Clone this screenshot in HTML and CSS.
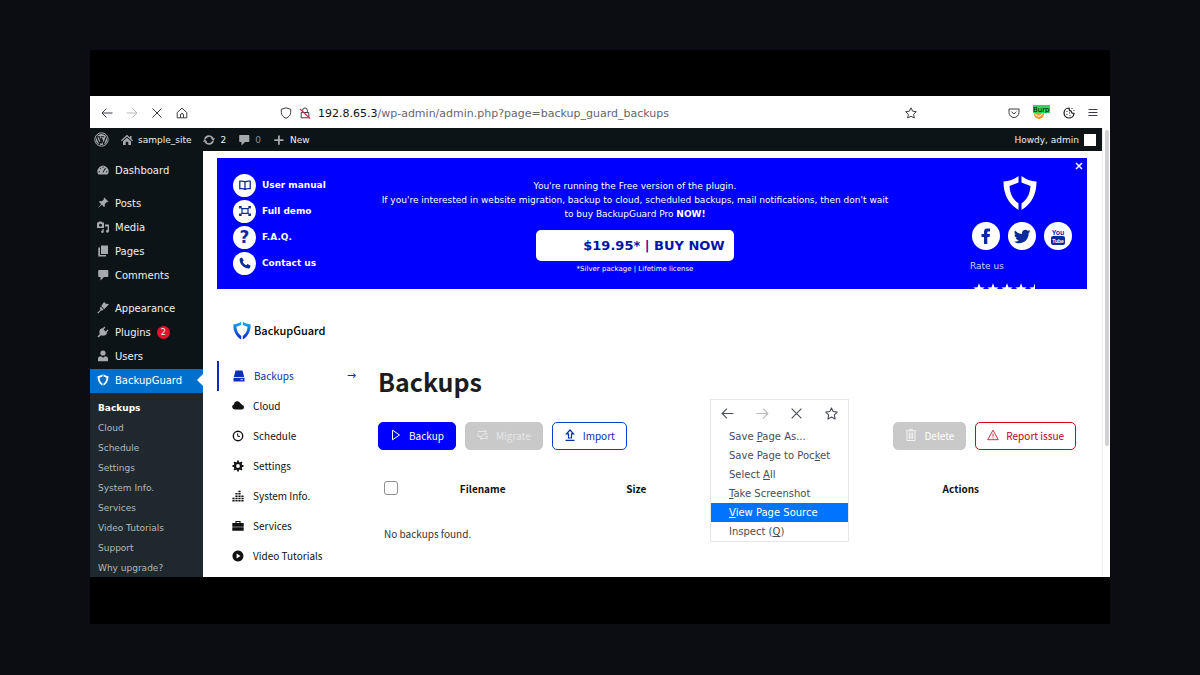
FILE: index.html
```html
<!DOCTYPE html>
<html lang="en">
<head>
  <meta charset="UTF-8">
  <meta content="width=device-width, initial-scale=1.0"
        name="viewport">
  <title>Backups - BackupGuard</title>
  <link rel="stylesheet" href="styles.css">
</head>
<body>
  <svg class="defs" width="0" height="0" aria-hidden="true">
    <symbol id="shield" viewBox="0 0 34 36">
      <path d="M15.500 1v6.500L6.500 11c.5 7.500 3 13 9 17.500V35C5 28.500.5 19 .5 6.500 6.500 6 11 4.500 15.500 1z"/>
      <path d="M18.500 1v6.500l9 3.500c-.5 7.500-3 13-9 17.500V35C29 28.500 33.500 19 33.500 6.500 27.500 6 23 4.500 18.500 1z"/>
    </symbol>
    <symbol id="left" viewBox="0 0 12 12"><path d="M11.500 6H1M5.500 1.500 1 6l4.500 4.500" fill="none" stroke="currentColor"/></symbol>
    <symbol id="right" viewBox="0 0 12 12"><path d="M.5 6H11M6.500 1.500 11 6l-4.500 4.500" fill="none" stroke="currentColor"/></symbol>
    <symbol id="cross" viewBox="0 0 12 12"><path d="M1.500 1.500l9 9M10.500 1.500l-9 9" fill="none" stroke="currentColor"/></symbol>
    <symbol id="star-line" viewBox="0 0 12 12"><path d="M6 .8l1.600 3.400 3.700.5-2.700 2.600.7 3.700L6 9.200 2.700 11l.7-3.700L.7 4.700l3.700-.5z" fill="none" stroke="currentColor" stroke-linejoin="round"/></symbol>
    <symbol id="comment" viewBox="0 0 12 12"><path d="M2 1h8.500q.8 0 .8.800v5.400q0 .8-.8.800H7L3.500 11.500V8H2q-.8 0-.8-.8V1.800Q1.200 1 2 1z"/></symbol>
    <symbol id="star" viewBox="0 0 12 12"><path d="M6 .3l1.500 3.900 4.200.2-3.300 2.600 1.200 4.100L6 8.800l-3.600 2.300L3.600 7 .3 4.400l4.200-.2z"/></symbol>
  </svg>

  <div class="frame">
    <div class="browser">
      <div class="toolbar">
        <div class="nav-buttons">
          <button aria-label="Back"><svg class="icon"><use href="#left"/></svg></button>
          <button aria-label="Forward" class="dim"><svg class="icon"><use href="#right"/></svg></button>
          <button aria-label="Stop"><svg class="icon"><use href="#cross"/></svg></button>
          <button aria-label="Home"><svg class="icon" viewBox="0 0 12 12"><path d="M1.200 5.500 6 1.200l4.800 4.300v5.300H1.200zM4.500 10.800V8a1.500 1.500 0 0 1 3 0v2.800" fill="none" stroke="currentColor" stroke-linejoin="round"/></svg></button>
        </div>
        <div class="address">
          <svg class="icon" viewBox="0 0 12 12"><path d="M6 .8l4.700 1.500v3.200c0 2.500-1.700 4.500-4.700 5.800-3-1.300-4.700-3.300-4.700-5.800V2.300z" fill="none" stroke="currentColor" stroke-linejoin="round"/></svg>
          <svg class="icon" viewBox="0 0 12 12"><path d="M2.200 5.500h7.600v5.300H2.200zM3.700 5.500V3.200a2.300 2.300 0 0 1 4.600 0v2.300" fill="none" stroke="currentColor"/><path d="M1 2l10 9.500" stroke="#e22850" stroke-width="1.200"/></svg>
          <span class="url"><b>192.8.65.3</b>/wp-admin/admin.php?page=backup_guard_backups</span>
          <button aria-label="Bookmark this page"><svg class="icon"><use href="#star-line"/></svg></button>
        </div>
        <div class="extensions">
          <button aria-label="Pocket"><svg class="icon" viewBox="0 0 12 12"><path d="M1 2h10v3.500a5 5 0 0 1-10 0zM3.500 4.700 6 7l2.500-2.300" fill="none" stroke="currentColor" stroke-linejoin="round"/></svg></button>
          <button aria-label="Burp proxy" class="proxy"><svg width="18" height="18" viewBox="0 0 18 18"><circle cx="7" cy="10" r="5" fill="#f29a2e"/><path d="M3.500 10.500q4 4 7-1" fill="none" stroke="#fff"/><path d="M1 1h17v8H1z" fill="#39d353"/><text x="1" y="8" class="proxy-text">Burp</text></svg></button>
          <button aria-label="Cookies"><svg class="icon" viewBox="0 0 12 12"><path d="M6 1a5 5 0 1 0 5 5.500L9 6 8 4 6.500 3.500zM8.500 1.500h1M10.500 3.500h.8" fill="none" stroke="#111" stroke-width="1.200"/><path d="M3.500 4h1v1h-1zM3.500 7h1v1h-1zM6 5.500h1v1H6zM6.500 8.300h1v1h-1z" fill="#111"/></svg></button>
          <button aria-label="Menu"><svg class="icon" viewBox="0 0 12 12"><path d="M1.500 2.500h9M1.500 5.500h9M1.500 8.500h9" stroke="currentColor"/></svg></button>
        </div>
      </div>

      <div class="viewport">
        <div class="site">
          <header class="adminbar">
            <a href="#" aria-label="WordPress"><svg width="15" height="15" viewBox="0 0 15 15"><circle cx="7.500" cy="7.500" r="6.700" fill="none" stroke="#a7aaad"/><circle cx="7.500" cy="7.500" r="5.600" fill="#a7aaad"/><path d="M2.500 4.800 5.600 12 7.600 6.500 9.600 12l2.600-7M5.200 4.800 7.800 11.500M2 4.800h4M6.700 4.800h3.500" fill="none" stroke="#0c1418" stroke-width="1.100"/></svg></a>
            <a href="#" class="site-name"><svg class="icon" viewBox="0 0 12 12"><path d="M6 .8 9 3.500V2h1.500v3L12 6.300l-.8.9L6 2.600.8 7.200 0 6.300z"/><path d="M6 3.700l4 3.500V11H7.300V7.800H4.700V11H2V7.200z"/></svg>sample_site</a>
            <a href="#"><svg class="icon" viewBox="0 0 12 12"><path d="M2 5a4.200 4.200 0 0 1 7.800-.6M10 7a4.200 4.200 0 0 1-7.800.6" fill="none" stroke="#a7aaad" stroke-width="1.700"/><path d="M7.800 4.300H12L10.300 7zM4.200 7.700H0L1.700 5z"/></svg>2</a>
            <a href="#" class="muted"><svg class="icon"><use href="#comment"/></svg>0</a>
            <a href="#"><svg class="icon" viewBox="0 0 12 12"><path d="M5 1.500h1.800v3.700h3.700V7H6.800v3.700H5V7H1.300V5.200H5z"/></svg>New</a>
            <a href="#" class="account">Howdy, admin<span class="avatar"></span></a>
          </header>

          <div class="columns">
            <nav class="sidebar" aria-label="Admin menu">
              <div class="group">
                <a href="#"><svg class="icon" viewBox="0 0 12 12"><path d="M1.500 10.500A5.500 5.500 0 1 1 10.500 10.500z"/><path d="M6 8.500 8.500 4M3 7.800H1.800M3.700 4.800l-.8-.8M6 3.800V2.500M10.200 7.800H9" stroke="#0c1418"/></svg>Dashboard</a>
              </div>
              <div class="group">
                <a href="#"><svg class="icon" viewBox="0 0 12 12"><path d="M7.300.5l4.200 4.200-1 .6-.7-.2L7.700 7.200l.2 2-.9.8-2.200-2.200L.5 11.500l3.600-4.400L2 4.900l.9-.8 2 .2L7 2.200l-.3-.8z"/></svg>Posts</a>
                <a href="#"><svg class="icon" viewBox="0 0 12 12"><path fill-rule="evenodd" d="M0 1.500h1.300L2 .5h2.500l.7 1H7V7H0zM3.500 2.700a1.500 1.500 0 1 0 .1 0z"/><path d="M8 3.500h4v6.700a1.500 1.500 0 1 1-1.300-1.500V5.500H8zM6.700 8v2.800a1.300 1.300 0 1 1-1.200-1.400V8z"/></svg>Media</a>
                <a href="#"><svg class="icon" viewBox="0 0 12 12"><path d="M4 .5h7v8.500H4z"/><path d="M1.300 2.500H3V10h6v1.500H1.300z"/></svg>Pages</a>
                <a href="#"><svg class="icon"><use href="#comment"/></svg>Comments</a>
              </div>
              <div class="group">
                <a href="#"><svg class="icon" viewBox="0 0 12 12"><path d="M6 1.200 7.200 0l1.300 1.500 3.500.8-4.800 4.900L4.300 4z"/><path d="M3.700 4.600 6.600 7.700l-1.400.9-1.300-.2L1.300 11.500.3 10.700l3-2.900-.4-1.500z"/></svg>Appearance</a>
                <a href="#"><svg class="icon" viewBox="0 0 12 12"><path d="M7.500.5l.9.900-1.800 2 2 2 2-1.800.9.900-2 2 .7.700C8.700 9.700 6 10.200 4 9.200L1.500 11.500.5 10.500 2.800 8C1.800 6 2.300 3.500 4.800 2.300l.7.300z"/></svg>Plugins<span class="count">2</span></a>
                <a href="#"><svg class="icon" viewBox="0 0 12 12"><circle cx="6" cy="3" r="2.600"/><path d="M1 11.300V8.500C1 7 2.500 6.200 4 6.200l2 1.500 2-1.500c1.500 0 3 .8 3 2.300v2.800z"/></svg>Users</a>
                <a href="#" class="current"><svg class="icon"><use href="#shield"/></svg>BackupGuard</a>
              </div>
              <div class="submenu">
                <a href="#" class="selected">Backups</a>
                <a href="#">Cloud</a>
                <a href="#">Schedule</a>
                <a href="#">Settings</a>
                <a href="#">System Info.</a>
                <a href="#">Services</a>
                <a href="#">Video Tutorials</a>
                <a href="#">Support</a>
                <a href="#">Why upgrade?</a>
              </div>
            </nav>

            <main class="content">
              <section class="banner">
                <div class="banner-links">
                  <a href="#"><span class="round"><svg class="icon" viewBox="0 0 12 12"><path d="M6 2.800Q4 1.800 .8 2.200v7.500Q4 9.300 6 10.300 8 9.300 11.200 9.700V2.200Q8 1.800 6 2.800zV10" fill="none" stroke="currentColor" stroke-width="1.300"/></svg></span>User manual</a>
                  <a href="#"><span class="round"><svg class="icon" viewBox="0 0 12 12"><path d="M3 3.700h6v4.600H3zM.7 3.500V1.500h2M9.300 1.500h2v2M11.300 8.500v2h-2M2.700 10.500h-2v-2M.7 1.500l2.300 2.200M11.300 1.500 9 3.700M11.300 10.500 9 8.300M.7 10.500 3 8.300" fill="none" stroke="currentColor" stroke-width="1.200"/></svg></span>Full demo</a>
                  <a href="#"><span class="round question">?</span>F.A.Q.</a>
                  <a href="#"><span class="round"><svg class="icon" viewBox="0 0 12 12"><path d="M1 1.200 3 .5l1.800 3-1.200 1.300q1 2.300 3.500 3.500l1.500-1.200 3 1.700-.7 2.100Q9.500 12 7 11 2.500 9 1 5 .2 2.500 1 1.200z"/></svg></span>Contact us</a>
                </div>
                <div class="pitch">
                  <p>You're running the Free version of the plugin.</p>
                  <p>If you're interested in website migration, backup to cloud, scheduled backups, mail notifications, then don't wait<br>
                  to buy BackupGuard Pro <b>NOW!</b></p>
                  <a href="#" class="buy">$19.95* | BUY NOW</a>
                  <small>*Silver package | Lifetime license</small>
                </div>
                <div class="social">
                  <svg class="banner-logo"><use href="#shield"/></svg>
                  <div class="networks">
                    <a href="#" aria-label="Facebook"><svg viewBox="0 0 28 28"><circle cx="14" cy="14" r="14" fill="#fff"/><path d="M12 22v-7H9.500v-3H12V9.800C12 7.500 13.300 6.500 15.200 6.500H18v3h-1.700c-.8 0-1 .4-1 1V12H18l-.4 3h-2.300v7z"/></svg></a>
                    <a href="#" aria-label="Twitter"><svg viewBox="0 0 28 28"><circle cx="14" cy="14" r="14" fill="#fff"/><path d="M22.500 9.300l-1.900 1.900c.2 5.300-3.500 10-9.300 10-2 0-3.800-.5-5.300-1.500 1.800.1 3.500-.3 4.900-1.400-1.500-.1-2.700-1-3.200-2.300h1.500C7.700 15.500 6.500 14.200 6.500 12.500l1.500.4C6.600 11.900 6 10 7 8.500c1.700 2 4.200 3.300 7 3.500-.6-3.700 3.500-5.600 5.800-3.200L22 8l-1 1.600z"/></svg></a>
                    <a href="#" aria-label="YouTube"><svg viewBox="0 0 28 28"><circle cx="14" cy="14" r="14" fill="#fff"/><rect x="7" y="14" width="14" height="9" rx="2"/><text x="14" y="13" class="you">You</text><text x="14" y="21" class="tube">Tube</text></svg></a>
                  </div>
                  <span class="rate">Rate us</span>
                  <div class="stars">
                    <svg class="icon"><use href="#star"/></svg>
                    <svg class="icon"><use href="#star"/></svg>
                    <svg class="icon"><use href="#star"/></svg>
                    <svg class="icon"><use href="#star"/></svg>
                    <svg class="icon" viewBox="0 0 12 12"><path d="M6 .3v8.500l-3.600 2.300L3.600 7 .3 4.400l4.200-.2z"/></svg>
                  </div>
                </div>
                <button class="close" aria-label="Close"><svg viewBox="0 0 8 8"><path d="M1 1l6 6M7 1 1 7" stroke="#fff" stroke-width="1.500"/></svg></button>
              </section>

              <div class="plugin">
                <nav class="plugin-nav" aria-label="BackupGuard">
                  <div class="brand">
                    <svg viewBox="0 0 34 36"><linearGradient id="g" x2="0" y2="1"><stop offset="0" stop-color="#1fb0f5"/><stop offset="1" stop-color="#0a22c8"/></linearGradient><use href="#shield" fill="url(#g)"/></svg>BackupGuard
                  </div>
                  <a href="#" class="active"><svg class="icon" viewBox="0 0 12 12"><path d="M2.500.5h7L11.200 7H.8z"/><path d="M.5 7.800h11v3.700H.5z"/><path d="M7.500 9.700h2.500" stroke="#fff" stroke-width=".8"/></svg>Backups<span class="arrow">→</span></a>
                  <a href="#"><svg class="icon" viewBox="0 0 12 12"><path d="M2.700 9.500a2.500 2.500 0 0 1-.7-4.900A3.300 3.300 0 0 1 8.300 3.200 2.400 2.400 0 0 1 10 5.100a2.200 2.200 0 0 1-.5 4.400z"/></svg>Cloud</a>
                  <a href="#"><svg class="icon" viewBox="0 0 12 12"><circle cx="6" cy="6" r="4.700" fill="none" stroke="currentColor" stroke-width="1.400"/><path d="M5.700 3.300v3h2.300" fill="none" stroke="currentColor"/></svg>Schedule</a>
                  <a href="#"><svg class="icon" viewBox="0 0 12 12"><circle cx="6" cy="6" r="3" fill="none" stroke="currentColor" stroke-width="2.200"/><path d="M6 .5v2M6 9.500v2M.5 6h2M9.500 6h2M2.100 2.100l1.400 1.400M8.500 8.500l1.400 1.400M9.900 2.100 8.500 3.500M3.500 8.500 2.100 9.900" stroke="currentColor" stroke-width="1.800"/></svg>Settings</a>
                  <a href="#"><svg class="icon" viewBox="0 0 12 12"><path d="M1.500 11.500V7.500M4.500 11.500V3M7.500 11.500V.5M10.500 11.500V5" stroke="currentColor" stroke-width="2.200" stroke-dasharray="1.500 .8"/></svg>System Info.</a>
                  <a href="#"><svg class="icon" viewBox="0 0 12 12"><path d="M4 3V1.500h4V3" fill="none" stroke="currentColor" stroke-width="1.200"/><path d="M.3 3h11.400v3.700H.3zM.3 7.300h11.400v3.500H.3z"/></svg>Services</a>
                  <a href="#"><svg class="icon" viewBox="0 0 12 12"><path fill-rule="evenodd" d="M6 .5a5.500 5.500 0 1 1-.1 0zM4.600 3.500v5L8.500 6z"/></svg>Video Tutorials</a>
                </nav>

                <section class="backups">
                  <h1>Backups</h1>
                  <div class="actions">
                    <button class="btn primary"><svg class="icon" viewBox="0 0 12 12"><path d="M2.500 1.200v9.600L9.500 6z" fill="none" stroke="currentColor" stroke-linejoin="round"/></svg>Backup</button>
                    <button class="btn" disabled><svg class="icon" viewBox="0 0 12 12"><path d="M1 2.500h8.500M7.500 1l2 1.500-2 1.500M11 9.500H3M5 8 3 9.500 5 11M1 4.500v3h3.500L7 5h4M8 7.500h3" fill="none" stroke="currentColor"/></svg>Migrate</button>
                    <button class="btn outline"><svg class="icon" viewBox="0 0 12 12"><path d="M6 1 9.500 4.800H7.500V9h-3V4.800h-2zM1.500 11.300h9" fill="none" stroke="currentColor" stroke-width="1.200"/></svg>Import</button>
                    <button class="btn delete" disabled><svg class="icon" viewBox="0 0 12 12"><path d="M.8 1.800h10.400M4.500 1.500V.6h3v.9M2 2.500v9h8v-9M4.300 3.500v6.500M6 3.500v6.500M7.700 3.500v6.500" fill="none" stroke="currentColor" stroke-width=".8"/></svg>Delete</button>
                    <button class="btn danger"><svg class="icon" viewBox="0 0 12 12"><path d="M6 1.200 11.300 10.700H.7zM6 4.500v3.300M6 8.500v1" fill="none" stroke="currentColor" stroke-width=".8"/></svg>Report issue</button>
                  </div>
                  <table>
                    <thead>
                      <tr>
                        <th class="check"><input type="checkbox" aria-label="Select all backups"></th>
                        <th class="filename">Filename</th>
                        <th class="size">Size</th>
                        <th></th>
                        <th class="row-actions">Actions</th>
                      </tr>
                    </thead>
                    <tbody>
                      <tr><td colspan="5">No backups found.</td></tr>
                    </tbody>
                  </table>
                </section>
              </div>
            </main>
          </div>
        </div>
        <div class="scrollbar"><div class="thumb"></div></div>
      </div>

      <div class="context-menu">
        <div class="menu-icons">
          <button aria-label="Back"><svg class="icon"><use href="#left"/></svg></button>
          <button aria-label="Forward" class="dim"><svg class="icon"><use href="#right"/></svg></button>
          <button aria-label="Stop"><svg class="icon"><use href="#cross"/></svg></button>
          <button aria-label="Bookmark page"><svg class="icon"><use href="#star-line"/></svg></button>
        </div>
        <button class="item">Save <u>P</u>age As...</button>
        <button class="item">Save Page to Poc<u>k</u>et</button>
        <button class="item">Select <u>A</u>ll</button>
        <button class="item"><u>T</u>ake Screenshot</button>
        <button class="item hover"><u>V</u>iew Page Source</button>
        <button class="item">Inspect (<u>Q</u>)</button>
      </div>
    </div>
  </div>
</body>
</html>
```
FILE: styles.css
```css
* {
    box-sizing: border-box;
}
body {
    margin: 0;
    min-height: 100vh;
    padding: 50px 90px;
    background: #0b0d12;
    font-family: "DejaVu Sans", sans-serif;
    font-size: 10px;
}
a {
    color: inherit;
    text-decoration: none;
}
button {
    font: inherit;
    color: inherit;
    background: none;
    border: none;
    padding: 0;
    display: flex;
    align-items: center;
}
svg {
    fill: currentColor;
    flex: none;
}
.defs {
    position: absolute;
}
.icon {
    width: 12px;
    height: 12px;
}
.frame {
    background: #000;
    padding: 46px 0 47px;
}
.browser {
    position: relative;
    background: #fff;
}

/* browser toolbar */
.toolbar {
    display: flex;
    align-items: center;
    height: 32px;
    padding: 2px 11px 0;
    color: #3c3c44;
}
.nav-buttons {
    display: flex;
    gap: 13px;
    width: 179px;
}
.dim {
    color: #b8b8bc;
}
.address {
    flex: 1;
    display: flex;
    align-items: center;
    gap: 7px;
    font-size: 11px;
}
.address button {
    margin-left: auto;
}
.url {
    color: #66666c;
}
.url b {
    font-weight: normal;
    color: #111;
}
.extensions {
    display: flex;
    align-items: center;
    justify-content: space-between;
    width: 91px;
    margin-left: 91px;
}
.proxy {
    align-self: flex-start;
}
.proxy-text {
    font-size: 7px;
    fill: #000;
}

.viewport {
    display: flex;
}
.site {
    flex: 1;
    min-width: 0;
}
.scrollbar {
    width: 8px;
    padding: 2px;
    border-left: 1px solid #f0f0f0;
}
.thumb {
    width: 4px;
    height: 71%;
    border-radius: 2px;
    background: #d2d2d6;
}

/* admin bar */
.adminbar {
    display: flex;
    align-items: center;
    gap: 12px;
    height: 23px;
    padding: 0 6px 0 4px;
    background: #0c1418;
    color: #f0f0f1;
    font-size: 9px;
}
.adminbar a {
    display: flex;
    align-items: center;
    gap: 5px;
}
.adminbar svg,
.group svg {
    color: #a7aaad;
}
.adminbar .muted {
    color: #8a8d90;
}
.adminbar .account {
    margin-left: auto;
}
.avatar {
    width: 12px;
    height: 12px;
    background: #fff;
}
.columns {
    display: flex;
}

/* admin menu */
.sidebar {
    width: 113px;
    padding-top: 8px;
    background: #0c1418;
    color: #f0f0f1;
}
.group + .group {
    margin-top: 9px;
}
.group a {
    display: flex;
    align-items: center;
    gap: 6px;
    height: 24px;
    padding: 0 0 2px 7px;
}
.group .current {
    position: relative;
    background: #0070cc;
    color: #fff;
}
.group .current svg {
    color: #fff;
}
.current::after {
    content: "";
    position: absolute;
    right: 0;
    border: 6px solid transparent;
    border-right-color: #fff;
    border-left: none;
}
.count {
    width: 13px;
    border-radius: 50%;
    background: #e8102a;
    font-size: 8px;
    line-height: 13px;
    text-align: center;
}
.submenu {
    padding-top: 4px;
    background: #1f282c;
    color: #b4b9bd;
    font-size: 9px;
}
.submenu a {
    display: block;
    padding: 2px 0 0 8px;
    line-height: 18px;
}
.submenu .selected {
    color: #fff;
    font-weight: bold;
}

.content {
    flex: 1;
    min-width: 0;
    padding: 7px 15px 0 14px;
}

/* promo banner */
.banner {
    position: relative;
    display: flex;
    height: 131px;
    padding: 0 15px 0 16px;
    overflow: hidden;
    background: #00f;
    color: #fff;
    font-size: 9px;
}
.banner-links {
    width: 142px;
    padding-top: 14px;
    font-weight: bold;
}
.banner-links a {
    display: flex;
    align-items: center;
    gap: 6px;
    height: 26px;
}
.round {
    display: flex;
    align-items: center;
    justify-content: center;
    width: 23px;
    height: 23px;
    border-radius: 50%;
    background: #fff;
    color: #0b2a9c;
}
.question {
    font-size: 17px;
}
.pitch {
    flex: 1;
    padding-top: 21px;
    text-align: center;
}
.pitch p {
    margin: 0;
    line-height: 14px;
}
.buy {
    display: block;
    width: 198px;
    margin: 9px auto 0;
    padding-left: 38px;
    border-radius: 5px;
    background: #fff;
    color: #0014a8;
    font-size: 13px;
    font-weight: bold;
    line-height: 31px;
}
.pitch small {
    display: block;
    font-size: 7px;
    line-height: 16px;
}
.social {
    width: 177px;
    padding: 17px 0 0 75px;
}
.banner-logo {
    display: block;
    width: 34px;
    height: 36px;
    margin: 0 auto 11px 33px;
}
.networks {
    display: flex;
    gap: 8px;
    padding-left: 2px;
    color: #0b2a9c;
}
.networks svg {
    display: block;
    width: 28px;
    height: 28px;
}
.you,
.tube {
    font: bold 7px "Liberation Sans", sans-serif;
    text-anchor: middle;
}
.tube {
    font-size: 5px;
    fill: #fff;
}
.rate {
    display: block;
    line-height: 33px;
    color: #ccd2ff;
}
.stars {
    display: flex;
    gap: 2px;
    padding-left: 3px;
}
.close {
    position: absolute;
    top: 4px;
    right: 4px;
}
.close svg {
    width: 8px;
    height: 8px;
}

/* plugin page */
.plugin {
    display: flex;
    font-family: "Noto Sans CJK SC", sans-serif;
    font-size: 10px;
    color: #111;
}
.plugin-nav {
    width: 161px;
    padding-top: 29px;
}
.brand {
    display: flex;
    align-items: center;
    gap: 3px;
    height: 24px;
    margin-bottom: 19px;
    padding-left: 16px;
    font-size: 11px;
    font-weight: 500;
    color: #000;
}
.brand svg {
    width: 18px;
    height: 19px;
}
.plugin-nav a {
    display: flex;
    align-items: center;
    gap: 9px;
    height: 30px;
    padding: 0 0 1px 15px;
}
.plugin-nav .active {
    border-left: 2px solid #0a2fb8;
    padding-left: 14px;
    color: #0a2fb8;
}
.arrow {
    margin: 0 22px 0 auto;
    font-family: "DejaVu Sans", sans-serif;
    font-size: 11px;
}
.backups {
    flex: 1;
    padding: 71px 11px 0 0;
}
.backups h1 {
    margin: 0 0 20px;
    font-size: 25px;
    line-height: 42px;
    color: #1d1d1f;
}
.actions {
    display: flex;
    gap: 9px;
}
.btn {
    height: 28px;
    padding: 0 11px 2px;
    gap: 7px;
    border: 1px solid #c9c9c9;
    border-radius: 5px;
    background: #c9c9c9;
    color: #e6e6e6;
}
.primary {
    border-color: #00f;
    background: #00f;
    color: #fff;
}
.outline {
    border-color: #0a3fc8;
    background: #fff;
    color: #0a2fa8;
}
.delete {
    margin-left: auto;
    color: #fff;
}
.danger {
    border-color: #cc0a1e;
    background: #fff;
    color: #b80014;
}
table {
    width: 100%;
    margin-top: 20px;
    table-layout: fixed;
    border-collapse: collapse;
}
th,
td {
    height: 38px;
    padding: 0 0 2px;
}
td {
    height: 52px;
    padding-left: 6px;
    color: #333;
}
.check {
    width: 4%;
}
.filename,
.size {
    width: 22%;
}
.row-actions {
    width: 33%;
}
.check input {
    display: block;
    appearance: none;
    width: 14px;
    height: 14px;
    margin: 0 0 0 6px;
    border: 1px solid #8f8f94;
    border-radius: 3px;
}

/* right-click menu */
.context-menu {
    position: absolute;
    left: 620px;
    top: 303px;
    width: 139px;
    border: 1px solid #e6e6e8;
    background: #fff;
    color: #4a4c58;
}
.menu-icons {
    display: flex;
    justify-content: space-between;
    height: 27px;
    padding: 0 10px;
}
.menu-icons .icon {
    width: 13px;
    height: 13px;
}
.context-menu .item {
    display: block;
    width: 100%;
    height: 19px;
    padding-left: 18px;
    text-align: left;
}
.context-menu .hover {
    background: #0074ff;
    color: #fff;
}
```
